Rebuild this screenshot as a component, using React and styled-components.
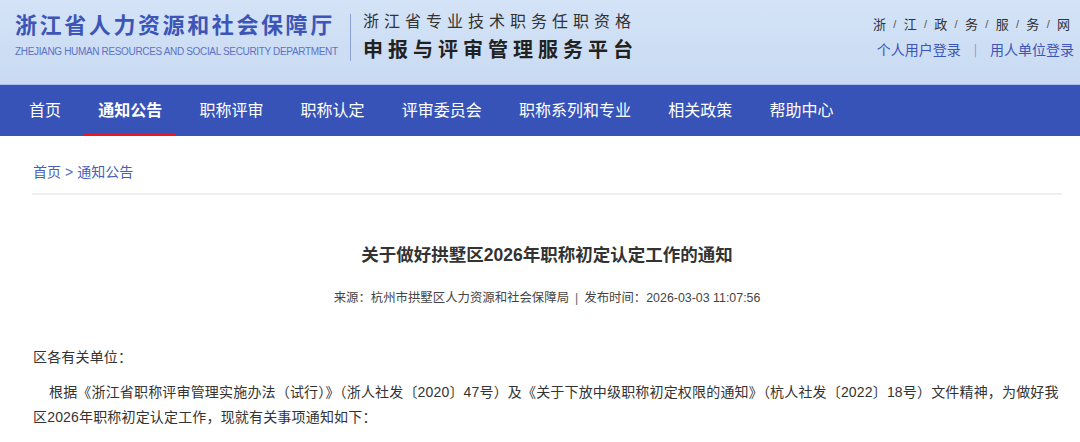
import React from "react";
import styled, { createGlobalStyle } from "styled-components";

const Global = createGlobalStyle`
  html, body { margin: 0; padding: 0; background: #fff; }
  body { font-family: "Liberation Sans", "Noto Sans CJK SC", sans-serif; color: #333; }
  * { box-sizing: border-box; }
`;

const CJK = `"Noto Sans CJK SC", "Liberation Sans", sans-serif`;

const Header = styled.header`
  height: 85px;
  display: flex;
  align-items: flex-start;
  padding: 0 6px 0 15px;
  background: linear-gradient(180deg, #d4e3f7 0%, #cddef4 60%, #c8daf2 100%);
  border-bottom: 1px solid #a9bde6;
`;

const Brand = styled.div`
  display: flex;
  flex-direction: column;
  padding-top: 9px;
  width: 335px;
`;

const BrandName = styled.div`
  font-family: ${CJK};
  font-size: 22px;
  font-weight: 700;
  line-height: 28px;
  letter-spacing: 2.6px;
  color: #3d55b6;
  white-space: nowrap;
`;

const BrandEn = styled.div`
  margin-top: 9px;
  font-family: "Liberation Sans", sans-serif;
  font-size: 10px;
  line-height: 12px;
  letter-spacing: -0.34px;
  color: #5d72c4;
  white-space: nowrap;
`;

const Platform = styled.div`
  margin-top: 14px;
  padding-left: 12px;
  border-left: 1px solid #8fa0d4;
  height: 47px;
  display: flex;
  flex-direction: column;
`;

const PlatformSub = styled.div`
  font-family: ${CJK};
  font-size: 16px;
  line-height: 16px;
  letter-spacing: 5px;
  color: #333;
  white-space: nowrap;
  margin-top: -2px;
`;

const PlatformTitle = styled.div`
  font-family: ${CJK};
  font-size: 20px;
  font-weight: 700;
  line-height: 24px;
  letter-spacing: 5px;
  color: #222;
  white-space: nowrap;
  margin-top: 9px;
`;

const Right = styled.div`
  margin-left: auto;
  display: flex;
  flex-direction: column;
  align-items: flex-end;
  padding-top: 15px;
`;

const GovLinks = styled.div`
  display: flex;
  align-items: center;
  gap: 7.3px;
  font-family: ${CJK};
  font-size: 13px;
  line-height: 18px;
  color: #333;
  margin-right: 4px;
`;

const Slash = styled.span`
  font-family: "Liberation Sans", sans-serif;
  font-size: 11px;
  color: #555;
`;

const Logins = styled.div`
  display: flex;
  align-items: center;
  margin-top: 6px;
  font-family: ${CJK};
  font-size: 14px;
  line-height: 20px;
  color: #3d55b6;
`;

const Pipe = styled.span`
  margin: 0 13px 0 13px;
  color: #7d8fcf;
  font-size: 12px;
`;

const Nav = styled.nav`
  height: 51px;
  background: #3853b7;
  display: flex;
  padding-left: 15px;
`;

const NavItem = styled.a`
  position: relative;
  display: block;
  padding: 0 14px;
  margin-right: 9.2px;
  font-family: ${CJK};
  font-size: 16px;
  line-height: 49px;
  color: #fff;
  font-weight: ${(p) => (p.$active ? 700 : 400)};
  text-decoration: none;
  white-space: nowrap;
  &::after {
    content: "";
    display: ${(p) => (p.$active ? "block" : "none")};
    position: absolute;
    left: 0;
    right: 0;
    bottom: 0;
    height: 3px;
    background: #ec1620;
  }
`;

const Main = styled.main`
  margin-left: 32px;
  width: 1030px;
`;

const Crumb = styled.div`
  margin-top: 25px;
  padding-bottom: 11px;
  border-bottom: 2px solid #eeeeee;
  font-family: ${CJK};
  font-size: 14px;
  line-height: 20px;
  color: #4a5fb9;
  padding-left: 1px;
`;

const CrumbSep = styled.span`
  font-family: "Liberation Sans", sans-serif;
  margin: 0 4px;
  color: #5a6cbc;
`;

const Title = styled.h1`
  margin: 47px 0 0;
  text-align: center;
  font-family: "Liberation Sans", "Noto Sans CJK SC", sans-serif;
  font-size: 17.5px;
  font-weight: 700;
  line-height: 26px;
  color: #333;
`;

const Meta = styled.div`
  margin-top: 20px;
  text-align: center;
  font-size: 12.4px;
  line-height: 20px;
  color: #444;
`;

const MetaSep = styled.span`
  margin: 0 6px;
  color: #666;
`;

const Body = styled.div`
  margin-top: 37px;
  font-size: 14px;
  color: #333;
`;

const P = styled.p`
  margin: 0 0 ${(p) => p.$mb || 0}px;
  line-height: 25px;
  letter-spacing: 0.17px;
  text-indent: ${(p) => (p.$indent ? "16px" : "0")};
  padding-left: 1px;
`;

const navItems = ["首页", "通知公告", "职称评审", "职称认定", "评审委员会", "职称系列和专业", "相关政策", "帮助中心"];
const gov = ["浙", "江", "政", "务", "服", "务", "网"];

export default function App() {
  return (
    <>
      <Global />
      <Header>
        <Brand>
          <BrandName>浙江省人力资源和社会保障厅</BrandName>
          <BrandEn>ZHEJIANG HUMAN RESOURCES AND SOCIAL SECURITY DEPARTMENT</BrandEn>
        </Brand>
        <Platform>
          <PlatformSub>浙江省专业技术职务任职资格</PlatformSub>
          <PlatformTitle>申报与评审管理服务平台</PlatformTitle>
        </Platform>
        <Right>
          <GovLinks>
            {gov.map((c, i) => (
              <React.Fragment key={i}>
                {i > 0 && <Slash>/</Slash>}
                <span>{c}</span>
              </React.Fragment>
            ))}
          </GovLinks>
          <Logins>
            <span>个人用户登录</span>
            <Pipe>|</Pipe>
            <span>用人单位登录</span>
          </Logins>
        </Right>
      </Header>
      <Nav>
        {navItems.map((n) => (
          <NavItem key={n} href="#" $active={n === "通知公告"}>
            {n}
          </NavItem>
        ))}
      </Nav>
      <Main>
        <Crumb>首页<CrumbSep>&gt;</CrumbSep>通知公告</Crumb>
        <Title>关于做好拱墅区2026年职称初定认定工作的通知</Title>
        <Meta>
          来源：杭州市拱墅区人力资源和社会保障局<MetaSep>|</MetaSep>发布时间：2026-03-03 11:07:56
        </Meta>
        <Body>
          <P $mb={10}>区各有关单位：</P>
          <P $indent>
            根据《浙江省职称评审管理实施办法（试行）》（浙人社发〔2020〕47号）及《关于下放中级职称初定权限的通知》（杭人社发〔2022〕18号）文件精神，为做好我区2026年职称初定认定工作，现就有关事项通知如下：
          </P>
        </Body>
      </Main>
    </>
  );
}
